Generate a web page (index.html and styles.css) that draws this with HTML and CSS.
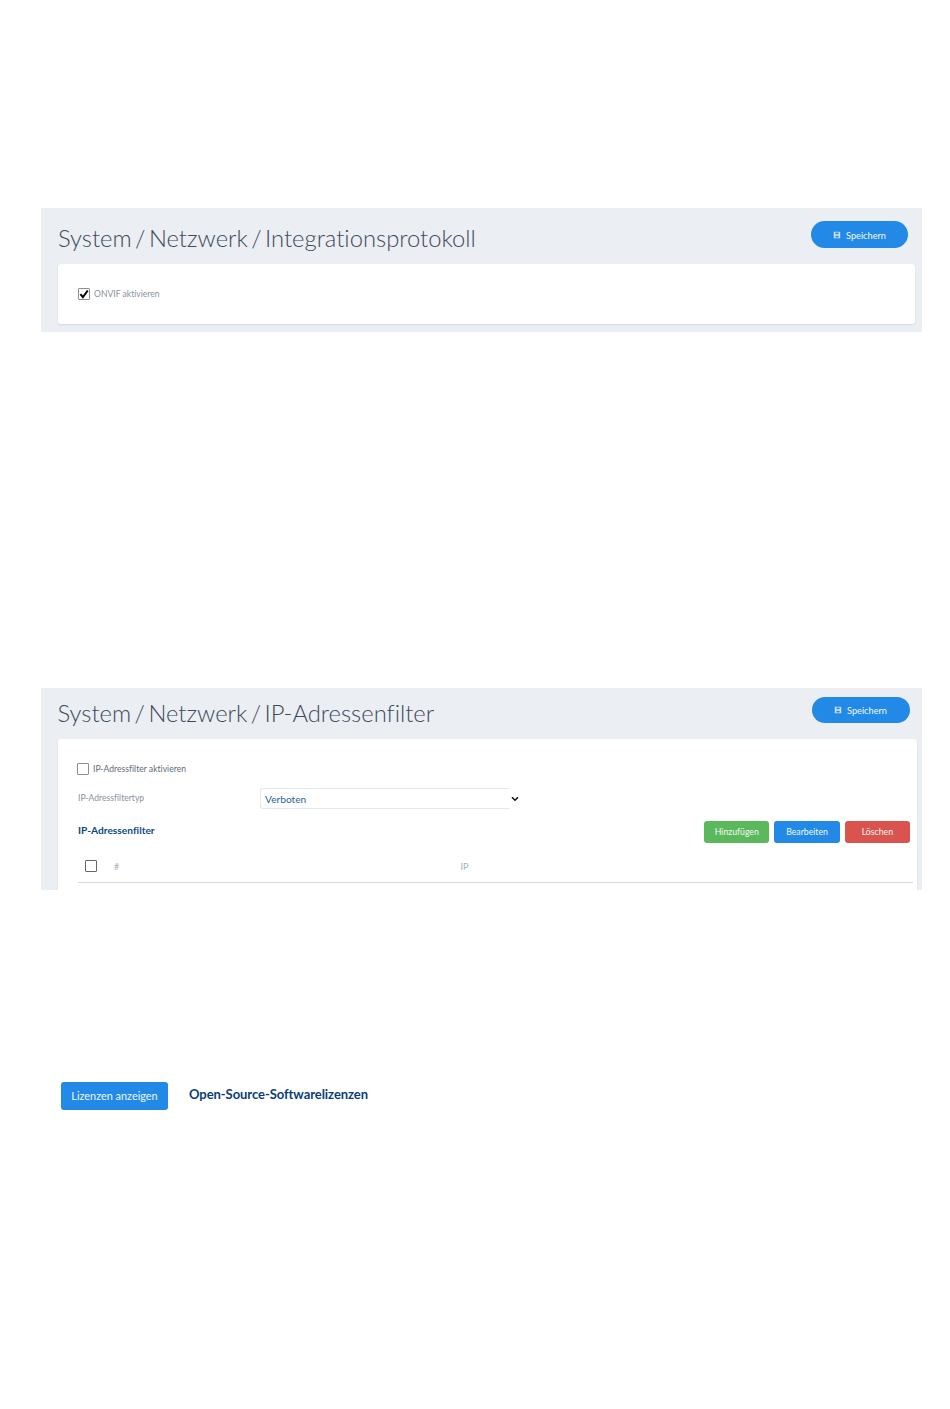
FILE: index.html
```html
<!DOCTYPE html>
<html lang="de">
<head>
<meta charset="utf-8">
<title>System / Netzwerk</title>
<link rel="stylesheet" href="styles.css">
</head>
<body>
<section class="panel panel-onvif">
  <header class="panel-head head-onvif">
    <h1 class="title">System / Netzwerk / Integrationsprotokoll</h1>
    <button class="save" type="button">
      <svg class="save-icon" viewBox="0 0 10 10"><path fill-rule="evenodd" d="M1 1h7l1 1v7H1zM3 2v2h4V2zM3 6v2h4V6z" fill="#cfe3f8"/></svg>
      Speichern
    </button>
  </header>
  <div class="card card-onvif">
    <label class="check-row">
      <span class="box"><svg viewBox="0 0 12 12"><path d="M2.4 6.2l2.5 2.9 4.9-6.6" fill="none" stroke="#000" stroke-width="2"/></svg></span>
      <span class="check-label muted">ONVIF aktivieren</span>
    </label>
  </div>
</section>

<section class="panel panel-ip">
  <header class="panel-head head-ip">
    <h1 class="title title-ip">System / Netzwerk / IP-Adressenfilter</h1>
    <button class="save save-ip" type="button">
      <svg class="save-icon" viewBox="0 0 10 10"><path fill-rule="evenodd" d="M1 1h7l1 1v7H1zM3 2v2h4V2zM3 6v2h4V6z" fill="#cfe3f8"/></svg>
      Speichern
    </button>
  </header>
  <div class="card card-ip">
    <label class="check-row check-row-ip">
      <span class="box"></span>
      <span class="check-label">IP-Adressfilter aktivieren</span>
    </label>
    <div class="field">
      <span class="field-label">IP-Adressfiltertyp</span>
      <div class="select-wrap">
        <select class="select"><option>Verboten</option></select>
        <svg class="chevron" viewBox="0 0 8 6"><path d="M1 1.2l3 3 3-3" fill="none" stroke="#111" stroke-width="1.6"/></svg>
      </div>
    </div>
    <div class="list-head">
      <h2 class="list-title">IP-Adressenfilter</h2>
      <div class="actions">
        <button class="action green" type="button">Hinzufügen</button>
        <button class="action blue" type="button">Bearbeiten</button>
        <button class="action red" type="button">Löschen</button>
      </div>
    </div>
    <div class="table-head">
      <span class="box box-dark"></span>
      <span class="col-num">#</span>
      <span class="col-ip">IP</span>
    </div>
  </div>
</section>

<section class="licenses">
  <button class="license-btn" type="button">Lizenzen anzeigen</button>
  <h2 class="license-title">Open-Source-Softwarelizenzen</h2>
</section>
</body>
</html>
```
FILE: styles.css
```css
* { box-sizing: border-box; }
html, body { margin: 0; padding: 0; background: #fff; }
body { width: 950px; height: 1409px; overflow: hidden; font-family: Lato, "Liberation Sans", sans-serif; font-variant-ligatures: none; }

.panel { margin-left: 41px; width: 881px; background: #ebeef3; overflow: hidden; }
.panel-onvif { margin-top: 208px; height: 124px; padding: 13px 7px 0 17px; }
.panel-ip { margin-top: 356px; height: 202px; padding: 9px 5px 0 17px; }

.panel-head { display: flex; justify-content: space-between; align-items: flex-start; }
.head-onvif { height: 43px; padding-right: 7px; }
.head-ip { height: 42px; padding-right: 7px; }

.title { margin: 0; font-size: 23.8px; line-height: 34px; font-weight: 300; word-spacing: -3px; color: #3d4a5a; white-space: nowrap; }
.title-ip { margin-left: -.5px; margin-top: -1px; }

.save { display: flex; align-items: center; justify-content: center; gap: 5px; width: 97px; height: 27px; padding: 1px 0 0; border: 0; border-radius: 14px; background: #228ae6; color: #f2f8fe; font: 9.2px Lato, "Liberation Sans", sans-serif; }
.save-ip { width: 98px; height: 26px; padding: 0 1px 0 0; }
.save-icon { width: 8px; height: 8px; }

.card { background: #fff; border-radius: 3px; box-shadow: 0 1px 2px rgba(60, 70, 90, .12); }
.card-onvif { height: 60px; padding: 24px 20px 0; }
.card-ip { height: 170px; padding: 24px 4px 0 20px; }

.check-row { display: flex; align-items: center; gap: 4px; height: 12px; }
.check-row-ip { margin-left: -1px; }
.box { flex: none; width: 12px; height: 12px; border: 1px solid #8f8f8f; border-radius: 1px; background: #fff; display: block; }
.box svg { display: block; width: 12px; height: 12px; margin: -1px; }
.box-dark { border-color: #666; }
.check-label { font-size: 8.6px; line-height: 12px; color: #5f6b78; }
.muted { color: #8a929b; }

.field { display: flex; align-items: center; margin-top: 13px; height: 21px; }
.field-label { width: 182px; font-size: 8.6px; color: #8a929b; margin-top: -1px; }
.select-wrap { position: relative; width: 260px; height: 21px; }
.select { appearance: none; display: block; width: 250px; height: 21px; padding: 0 0 0 4px; border: 1px solid #e3e8ee; border-right: 0; border-radius: 3px 0 0 3px; background: #fff; color: #2a6496; font: 10.2px Lato, "Liberation Sans", sans-serif; }
.chevron { position: absolute; right: 1px; top: 8px; width: 8px; height: 6px; }

.list-head { display: flex; justify-content: space-between; align-items: center; height: 22px; margin-top: 12px; padding-right: 3px; }
.list-title { margin: -5px 0 0; font-size: 10.2px; font-weight: 700; color: #0f4a80; }
.actions { display: flex; gap: 5px; }
.action { width: 65.3px; height: 22px; padding: 0 0 1px; border: 0; border-radius: 3px; color: #f4f8f4; font: 8.7px Lato, "Liberation Sans", sans-serif; }
.green { background: #5cb85c; }
.blue { background: #228ae6; }
.red { background: #d9534f; }

.table-head { display: flex; align-items: center; height: 40px; padding: 7px 0 0 7px; border-bottom: 1px solid #d3d6da; }
.col-num { margin-left: 17px; width: 346.5px; font-size: 9px; color: #a3b0bd; }
.col-ip { font-size: 9px; color: #a3b0bd; }

.licenses { display: flex; align-items: flex-start; margin: 192px 0 0 61px; }
.license-btn { width: 107px; height: 28px; padding: 0 0 2px; border: 0; border-radius: 3px; background: #228ae6; color: #eef6fe; font: 10.9px Lato, "Liberation Sans", sans-serif; }
.license-title { margin: 3px 0 0 21px; font-size: 13px; line-height: 18px; font-weight: 700; color: #0a3d78; letter-spacing: -.06px; }
```
